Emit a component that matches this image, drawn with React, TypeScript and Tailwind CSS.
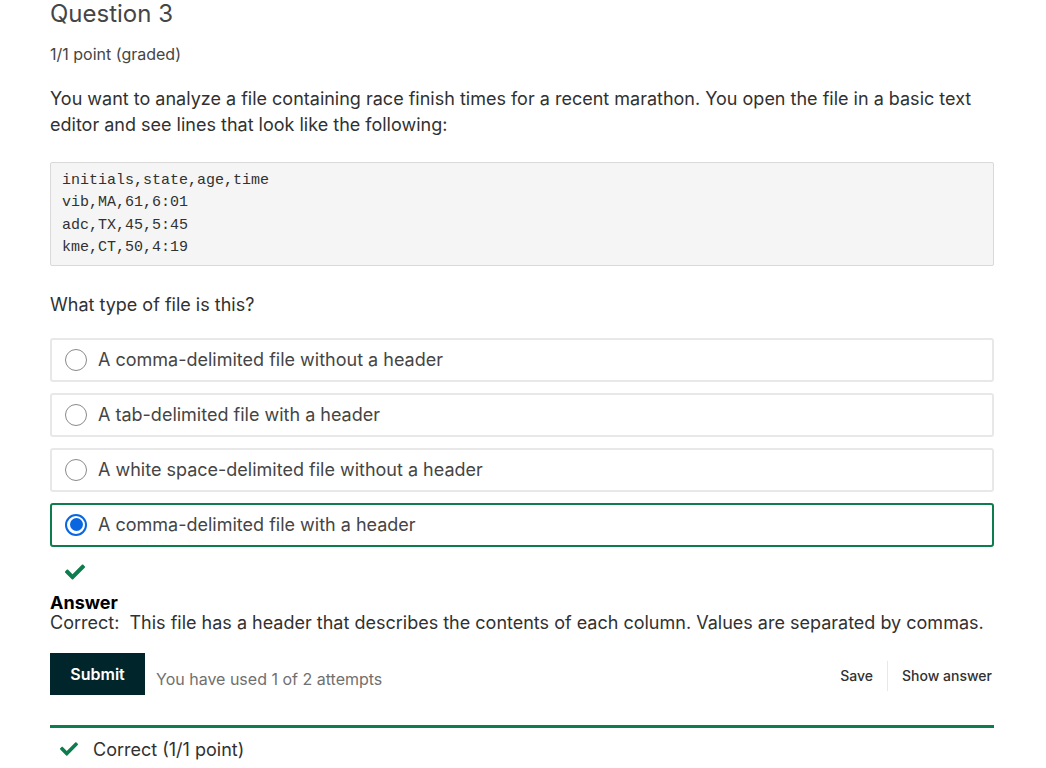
import React from "react";

const options = [
  "A comma-delimited file without a header",
  "A tab-delimited file with a header",
  "A white space-delimited file without a header",
  "A comma-delimited file with a header",
];

const codeLines = [
  "initials,state,age,time",
  "vib,MA,61,6:01",
  "adc,TX,45,5:45",
  "kme,CT,50,4:19",
];

// bold check, same shape as the font-awesome one
const Check: React.FC<{ className?: string }> = ({ className }) => (
  <svg viewBox="0 0 512 512" className={className} fill="currentColor">
    <path d="M173.898 439.404l-166.4-166.4c-9.997-9.997-9.997-26.206 0-36.204l36.203-36.204c9.997-9.998 26.207-9.998 36.204 0L192 312.69 432.095 72.596c9.997-9.997 26.207-9.997 36.204 0l36.203 36.204c9.997 9.997 9.997 26.206 0 36.204l-294.4 294.401c-9.998 9.997-26.207 9.997-36.204-.001z" />
  </svg>
);

const App: React.FC = () => {
  const selected = 3;

  return (
    <div
      className="min-h-screen bg-white text-[#454545]"
      style={{ fontFamily: "Inter, 'Noto Sans', sans-serif" }}
    >
      <div className="w-[944px] ml-[50px]">
        <h2 className="text-[24px] leading-[28px] font-normal">Question 3</h2>
        <div className="text-[16px] mt-[16px] leading-[20px]">1/1 point (graded)</div>

        <p className="text-[18px] leading-[26px] mt-[22px] text-[#313131]">
          You want to analyze a file containing race finish times for a recent marathon. You open the file in a basic text
          editor and see lines that look like the following:
        </p>

        <pre
          className="mt-[24px] bg-[#f5f5f5] border border-[#d9d9d9] rounded-[2px] px-[11px] pt-[7px] pb-[5px] text-[15px] leading-[22.4px] text-[#313131]"
          style={{ fontFamily: "'Courier New', 'Liberation Mono', monospace" }}
        >
          {codeLines.join("\n")}
        </pre>

        <div className="text-[18px] leading-[24px] mt-[27px] text-[#313131]">What type of file is this?</div>

        <div className="mt-[21px] flex flex-col gap-[11px]">
          {options.map((opt, i) => (
            <div
              key={opt}
              className={
                i === selected
                  ? "h-[44px] flex items-center rounded-[3px] border-2 border-[#0d7d4d] pl-[13px]"
                  : "h-[44px] flex items-center rounded-[3px] border-2 border-[#e8e8e8] pl-[13px]"
              }
            >
              {i === selected ? (
                <span className="w-[22px] h-[22px] rounded-full border-[2px] border-[#0a66e0] flex items-center justify-center">
                  <span className="w-[13px] h-[13px] rounded-full bg-[#0a66e0]" />
                </span>
              ) : (
                <span className="w-[22px] h-[22px] rounded-full border-[1.5px] border-[#8a8a8a]" />
              )}
              <span className="ml-[11px] text-[18px] text-[#454545]">{opt}</span>
            </div>
          ))}
        </div>

        <Check className="w-[20px] h-[20px] text-[#0d7d4d] mt-[15px] ml-[15px]" />

        <div className="mt-[11px] text-[18px] leading-[20px] text-[#313131]">
          <div className="font-bold text-black">Answer</div>
          <div>Correct:&nbsp; This file has a header that describes the contents of each column. Values are separated by commas.</div>
        </div>

        <div className="mt-[20px] flex items-center">
          <button className="h-[42px] w-[95px] bg-[#00262b] text-white font-semibold text-[16px]">Submit</button>
          <span className="ml-[11px] mt-[10px] text-[16px] text-[#707070]">You have used 1 of 2 attempts</span>
          <div className="ml-auto mt-[4px] flex items-center text-[14px] text-[#313131] font-medium">
            <span className="pr-[14px]">Save</span>
            <span className="w-px h-[30px] bg-[#e8e8e8]" />
            <span className="pl-[14px] pr-[2px]">Show answer</span>
          </div>
        </div>

        <div className="mt-[30px] border-t-[3px] border-[#0d7d4d] flex items-center pt-[8px] pl-[10px]">
          <Check className="w-[18px] h-[18px] text-[#0d7d4d]" />
          <span className="ml-[15px] text-[18px] text-[#313131]">Correct (1/1 point)</span>
        </div>
      </div>
    </div>
  );
};

export default App;
